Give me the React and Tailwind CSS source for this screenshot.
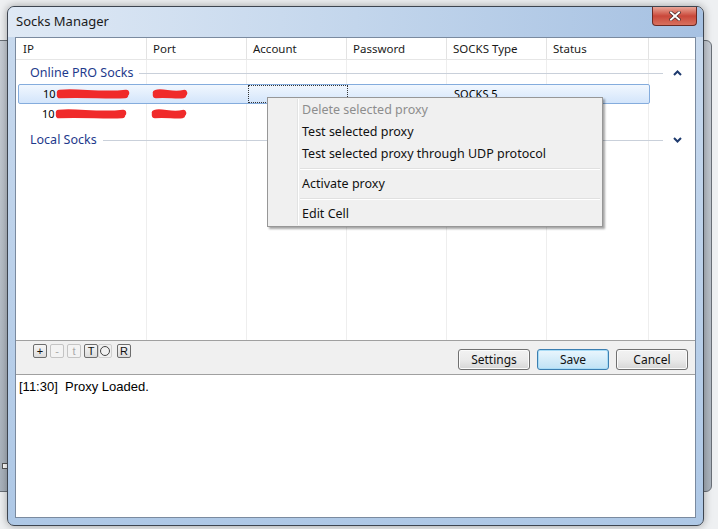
import React from 'react';

const UI = { fontFamily: '"Noto Sans", "Open Sans", sans-serif' };
const ARIAL = { fontFamily: '"Liberation Sans", Arial, sans-serif' };

const COLS = [
  { label: 'IP', w: 'w-[131px]', pl: 'pl-[7px]' },
  { label: 'Port', w: 'w-[100px]', pl: 'pl-[6px]' },
  { label: 'Account', w: 'w-[100px]', pl: 'pl-[6px]' },
  { label: 'Password', w: 'w-[100px]', pl: 'pl-[6px]' },
  { label: 'SOCKS Type', w: 'w-[100px]', pl: 'pl-[6px]' },
  { label: 'Status', w: 'w-[102px]', pl: 'pl-[6px]' },
];

// red marker scribble hiding the data
const Scribble = ({ w }) => (
  <svg width={w} height="12" viewBox={`0 0 ${w} 12`} className="block">
    <path d={`M4 5 C ${w * 0.3} 3, ${w * 0.6} 8, ${w - 4} 5 M4 7 C ${w * 0.4} 6, ${w * 0.7} 8, ${w - 5} 7`}
      stroke="#f02a2a" strokeWidth="6.5" strokeLinecap="round" fill="none" />
  </svg>
);

const GroupRow = ({ title, up }) => (
  <div className="h-[22px] flex items-center pl-[14px] pr-[12px]">
    <span className="text-[12.5px] text-[#1e3a8c] leading-none" style={UI}>{title}</span>
    <div className="flex-1 h-px bg-[#c9d0da] ml-[6px] mr-[10px]" />
    <svg width="9" height="6" viewBox="0 0 9 6" className="mr-[1px]">
      <path d={up ? 'M1 5 L4.5 1.5 L8 5' : 'M1 1 L4.5 4.5 L8 1'} stroke="#1e3a6e" strokeWidth="2" fill="none" />
    </svg>
  </div>
);

const MiniBtn = ({ children, dim }) => (
  <div className={`w-[14px] h-[14px] rounded-[2px] border flex items-center justify-center text-[11px] leading-none ${dim ? 'border-[#c4c4c4] text-[#a8a8a8] bg-[#f3f3f3]' : 'border-[#6d6d6d] text-[#111] bg-gradient-to-b from-[#f6f6f6] to-[#dcdcdc]'}`} style={ARIAL}>
    {children}
  </div>
);

const Btn = ({ children, focus }) => (
  <div className={`w-[72px] h-[21px] rounded-[3px] border flex items-center justify-center text-[12px] text-[#111] ${focus ? 'border-[#3c7fb1] bg-gradient-to-b from-[#eaf6fd] to-[#bfe2f5] shadow-[inset_0_0_0_1px_#a9dcf6]' : 'border-[#707070] bg-gradient-to-b from-[#f2f2f2] via-[#ebebeb] to-[#d6d6d6] shadow-[inset_0_0_0_1px_#fbfbfb]'}`} style={UI}>
    {children}
  </div>
);

const MenuItem = ({ children, disabled }) => (
  <div className={`h-[22px] flex items-center pl-[33px] text-[12.5px] ${disabled ? 'text-[#8d8d8d]' : 'text-[#111]'}`} style={UI}>
    {children}
  </div>
);

const MenuSep = () => (
  <div className="h-[8px] flex flex-col justify-center pl-[31px] pr-[2px]">
    <div className="h-px bg-[#e0e0e0]" />
    <div className="h-px bg-white" />
  </div>
);

export default function App() {
  return (
    <div className="relative w-[718px] h-[529px] overflow-hidden bg-[#eef0f2]">
      {/* window behind */}
      <div className="absolute left-[-20px] top-[40px] w-[732px] h-[452px] rounded-[6px] bg-gradient-to-b from-[#c8ced6] to-[#aab3bd] border border-[#6a7078]" />
      <div className="absolute left-[2px] top-[463px] w-[6px] h-[6px] bg-white border border-[#555]" />

      {/* main window */}
      <div className="absolute left-[7px] top-[6px] w-[697px] h-[520px] rounded-[7px] border border-[#3d4550] bg-gradient-to-b from-[#c9daee] to-[#aec8e6] flex flex-col shadow-[0_0_8px_rgba(0,0,0,0.35)]">
        {/* title bar */}
        <div className="h-[30px] shrink-0 flex items-start rounded-t-[7px] bg-gradient-to-r from-[#dfe9f5] via-[#c3d6ec] to-[#a6c1e2]">
          <div className="pl-[8px] pt-[5px] text-[13px] text-[#1b1b1b]" style={UI}>Socks Manager</div>
          <div className="ml-auto mr-[6px] w-[45px] h-[19px] rounded-b-[4px] border border-t-0 border-[#6b2a24] bg-gradient-to-b from-[#e8a598] via-[#c9473a] to-[#d8705e] flex items-center justify-center">
            <svg width="12" height="10" viewBox="0 0 12 10">
              <path d="M2 1.5 L10 8.5 M10 1.5 L2 8.5" stroke="#3a2020" strokeWidth="3.2" strokeLinecap="square" />
              <path d="M2 1.5 L10 8.5 M10 1.5 L2 8.5" stroke="#fff" strokeWidth="2" strokeLinecap="square" />
            </svg>
          </div>
        </div>

        {/* client area */}
        <div className="flex-1 mx-[7px] mb-[7px] border border-[#7a8a9f] bg-white flex flex-col min-h-0">
          {/* table */}
          <div className="h-[303px] shrink-0 flex flex-col border-b border-[#a0a0a0]">
            <div className="h-[22px] shrink-0 flex border-b border-[#e6e6e6] bg-white">
              {COLS.map(c => (
                <div key={c.label} className={`${c.w} ${c.pl} h-full border-r border-[#e3e3e3] flex items-center text-[11.5px] text-[#1a1a1a]`} style={UI}>{c.label}</div>
              ))}
              <div className="flex-1" />
            </div>

            <div className="relative flex-1">
              {/* grid lines */}
              <div className="absolute inset-0 flex pointer-events-none">
                {COLS.map(c => (
                  <div key={c.label} className={`${c.w} h-full border-r border-[#eeeeee]`} />
                ))}
              </div>

              <div className="relative pt-[2px]">
                <GroupRow title="Online PRO Socks" up />
                {/* selected row */}
                <div className="ml-[2px] w-[632px] h-[20px] rounded-[2px] border border-[#84acdd] bg-gradient-to-b from-[#f1f7fe] to-[#d3e5fb] flex items-center text-[11px] text-black" style={UI}>
                  <div className="w-[129px] pl-[24px] flex items-center">
                    <span>10</span><Scribble w={74} />
                  </div>
                  <div className="w-[100px] pl-[4px]"><Scribble w={36} /></div>
                  <div className="w-[100px] h-full border border-dotted border-[#333]" />
                  <div className="w-[100px]" />
                  <div className="w-[100px] pl-[6px] leading-none pb-[2px]">SOCKS 5</div>
                </div>
                <div className="ml-[2px] w-[632px] h-[20px] flex items-center text-[11px] text-black" style={UI}>
                  <div className="w-[129px] pl-[24px] flex items-center">
                    <span>10</span><Scribble w={72} />
                  </div>
                  <div className="w-[100px] pl-[4px]"><Scribble w={36} /></div>
                </div>
                <div className="h-[5px]" />
                <GroupRow title="Local Socks" />
              </div>
            </div>
          </div>

          {/* toolbar */}
          <div className="h-[34px] shrink-0 bg-[#f0f0f0] border-b border-[#a0a0a0] flex">
            <div className="flex items-start gap-[3px] pl-[17px] pt-[3px]">
              <MiniBtn>+</MiniBtn>
              <MiniBtn dim>-</MiniBtn>
              <MiniBtn dim>t</MiniBtn>
              <div className="flex">
                <MiniBtn>T</MiniBtn>
                <div className="w-[14px] h-[14px] rounded-[2px] border border-[#d0d0d0] flex items-center justify-center">
                  <div className="w-[10px] h-[10px] rounded-full border border-[#444]" />
                </div>
              </div>
              <div className="ml-[2px]"><MiniBtn>R</MiniBtn></div>
            </div>
            <div className="ml-auto flex items-start gap-[7px] pt-[8px] pr-[7px]">
              <Btn>Settings</Btn>
              <Btn focus>Save</Btn>
              <Btn>Cancel</Btn>
            </div>
          </div>

          {/* log */}
          <div className="flex-1 bg-white px-[3px] pt-[2px] text-[13px] text-black" style={ARIAL}>
            [11:30]&nbsp;&nbsp;Proxy Loaded.
          </div>
        </div>
      </div>

      {/* context menu */}
      <div className="absolute left-[267px] top-[97px] w-[336px] border border-[#979797] bg-[#f0f0f0] py-[1px] pl-[1px] shadow-[2px_2px_2px_rgba(0,0,0,0.35)]">
        <div className="absolute left-[29px] top-[1px] bottom-[1px] w-px bg-[#e2e3e3]" />
        <div className="absolute left-[30px] top-[1px] bottom-[1px] w-px bg-white" />
        <div className="relative">
          <MenuItem disabled>Delete selected proxy</MenuItem>
          <MenuItem>Test selected proxy</MenuItem>
          <MenuItem>Test selected proxy through UDP protocol</MenuItem>
          <MenuSep />
          <MenuItem>Activate proxy</MenuItem>
          <MenuSep />
          <MenuItem>Edit Cell</MenuItem>
        </div>
      </div>
    </div>
  );
}
